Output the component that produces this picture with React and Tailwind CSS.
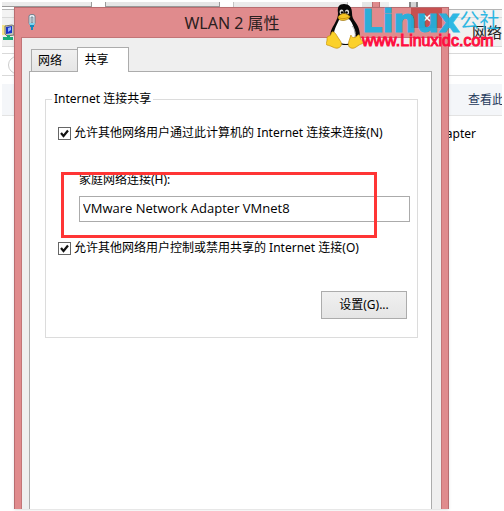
import React from 'react';

const NetworkIcon = () => (
    <svg className="h-[17px] w-3" viewBox="0 0 12 17" aria-hidden="true">
        <path d="M0 1h4v10H0z" fill="#f6e58a" />
        <path d="M3 2l7-1 2 1v9l-7 1-2-2z" fill="#c9c9bd" stroke="#77776c" strokeWidth="1" />
        <path d="M4 3l6-1v7l-6 1z" fill="#1a35c8" />
        <path d="M6 4l3-1v3l-3 2z" fill="#8eb4ff" />
        <path d="M5 11h3v2h3v3H1v-3h4z" fill="#1cae76" />
    </svg>
);

const AdapterIcon = () => (
    <svg className="h-4 w-2" viewBox="0 0 8 16" aria-hidden="true">
        <path d="M1 2q0-1.500 3-1.500T7 2v7l-1 2H2L1 9z" fill="#eef6fa" stroke="#6d7f8c" />
        <path d="M3 3h2v6H3z" fill="#c3cdd4" stroke="#5e7382" strokeWidth=".7" />
        <path d="M1 9h6l-1 2.500H2z" fill="#7ed3ee" />
        <path d="M2 11h4v2H5v3H3v-3H2z" fill="#1689bd" />
    </svg>
);

const Penguin = () => (
    <svg className="h-[46px] w-[38px] shrink-0" viewBox="0 0 38 46" aria-hidden="true">
        <path
            d="M12 10C11 4 13 1 18 1s8 3 8 9c0 4 1 6 4 10s5 11 3 16c-2 4-7 6-13 6S7 40 5 35s1-10 4-15c2-4 3-6 3-10z"
            fill="#080808"
        />
        <path d="M13 17c2-2 9-2 11 0 2 3 5 8 5 14 0 7-3 10-9 10-7 0-12-4-12-10 0-5 3-9 5-14z" fill="#fff" />
        <path d="M26 23c3 3 4 8 3 13" stroke="#aaa" fill="none" />
        <ellipse cx="15.500" cy="9" rx="2" ry="2.400" fill="#ddd" />
        <ellipse cx="21" cy="9" rx="2.200" ry="2.500" fill="#ddd" />
        <circle cx="16" cy="9.500" r="1.200" />
        <circle cx="20.500" cy="9.500" r="1.300" />
        <path d="M12 14c1-2 4-3.500 6-3.500s5 1.500 6 3c0 2-4 4-7 4s-5-1-5-3.500z" fill="#f5c524" stroke="#8e6505" strokeWidth=".6" />
        <path d="M13 14.500c3 2 7 1 10-.5" stroke="#a87206" strokeWidth=".6" fill="none" />
        <path
            d="M6 29c2-1 4 2 5 4l4 6c1 3 0 5-3 6s-6-2-11-3c-2-1 0-3 0-5s0-4 2-4 2-3 3-4z"
            fill="#fbd12b"
            stroke="#c28c0b"
            strokeWidth=".7"
        />
        <path
            d="M25 32c0 2 3 4 6 1 1-1 2-2 3 0 0 3 1 4 3 5 2 2-2 3-4 4-3 2-5 4-8 3s-3-4-2-7z"
            fill="#fbd12b"
            stroke="#c28c0b"
            strokeWidth=".7"
        />
    </svg>
);

// The network connections window that sits behind the dialog
const BackgroundWindow = () => (
    <div className="col-start-1 row-start-1 flex flex-col overflow-hidden">
        <div className="flex h-[7px]">
            <div className="h-[5px] w-[90px] border-r border-b border-[#9b9b9b] bg-[#ebebeb]" />
            <div className="ml-[13px] h-[5px] w-[115px] border-r border-b border-l border-[#9b9b9b] bg-[#e6e6e6]" />
            <div className="ml-[13px] h-[5px] w-[115px] border-r border-l border-[#c4c4c4] bg-[#ebebeb]" />
            <div className="ml-[14px] h-[5px] w-[10px] bg-[#e6e6e6]" />
            <div className="h-[5px] w-2 border-x border-[#b86d70] bg-[#e08b8d]" />
            <div className="h-[5px] w-[9px] bg-[#efefef]" />
            <div className="ml-[20px] h-[5px] w-[9px] border-x-2 border-[#888] bg-[#d5d5d5]" />
        </div>
        <div className="h-2 border-t border-[#b5b5b5] bg-[#f3f3f3]" />
        <div className="flex h-[30px] items-center justify-between border-y border-[#d9d9d9] bg-[#f0f0f0]">
            <NetworkIcon />
            <span className="text-[15px] leading-4 text-[#222]">网络</span>
        </div>
        <div className="h-[29px] bg-white">
            <div className="mt-[6px] flex h-[23px] items-center justify-between border-y border-[#d9d9d9]">
                <div className="ml-[6px] size-[18px] rounded-full border border-[#ccc]" />
            </div>
        </div>
        <div className="mt-2 flex h-8 items-center justify-end border-b border-[#e3e3e3] bg-[#f4f6f9]">
            <span className="w-[34px] overflow-hidden text-[12px] whitespace-nowrap text-[#1e395b]">查看此</span>
        </div>
        <div className="mt-[10px] flex justify-end pr-[26px] text-[12px] leading-4">apter</div>
    </div>
);

const CheckRow = ({ id, children }) => (
    <div className="flex items-center gap-[3px]">
        <span className="grid size-[13px] shrink-0">
            <input
                id={id}
                type="checkbox"
                defaultChecked
                className="peer col-start-1 row-start-1 size-[13px] appearance-none border border-[#666] bg-white"
            />
            <svg
                className="pointer-events-none invisible col-start-1 row-start-1 size-[13px] peer-checked:visible"
                viewBox="0 0 13 13"
                aria-hidden="true"
            >
                <path d="M3 6l2.500 3L10 3.500" fill="none" stroke="#111" strokeWidth="2.200" />
            </svg>
        </span>
        <label htmlFor={id} className="leading-4 whitespace-nowrap">
            {children}
        </label>
    </div>
);

const PropertiesDialog = () => (
    <div
        role="dialog"
        aria-labelledby="dialog-title"
        className="z-10 col-start-1 row-start-1 mt-[5px] mr-[53px] ml-3 flex flex-col border border-b-0 border-[#b86d70] bg-[#e08b8d] shadow-sm"
    >
        <div className="flex h-[29px]">
            <div className="flex w-[34px] justify-center pt-[6px]">
                <AdapterIcon />
            </div>
            <h1 id="dialog-title" className="flex-1 pt-[5px] pl-1 text-center text-[16px] leading-5 text-[#2b2020]">
                WLAN 2 属性
            </h1>
            <button
                type="button"
                aria-label="关闭"
                className="mr-[6px] flex h-5 w-[31px] items-center justify-center bg-[#c75050]"
            >
                <svg className="size-2" viewBox="0 0 8 8" aria-hidden="true">
                    <path d="M1 1l6 6M7 1L1 7" stroke="#fff" strokeWidth="1.600" />
                </svg>
            </button>
        </div>

        <div className="mx-[6px] flex flex-1 flex-col border border-b-0 border-[#c27577] bg-[#efefef] pt-[9px] pr-[9px] pl-[7px]">
            <div role="tablist" className="z-10 -mb-px flex items-end pl-[2px]">
                <button
                    type="button"
                    role="tab"
                    aria-selected="false"
                    className="-mr-px mb-px h-[22px] w-[47px] border border-b-0 border-[#acacac] bg-linear-to-b from-[#f0f0f0] to-[#e5e5e5] pr-[9px] leading-4"
                >
                    网络
                </button>
                <button
                    type="button"
                    role="tab"
                    aria-selected="true"
                    className="h-[25px] w-[52px] border border-b-0 border-[#acacac] bg-white pr-[13px] pb-px leading-4"
                >
                    共享
                </button>
            </div>

            <div role="tabpanel" className="flex-1 border border-b-0 border-[#acacac] bg-white pt-[19px] pr-[13px] pl-[15px]">
                <fieldset className="border border-[#dcdcdc] pr-[7px] pb-[18px] pl-3">
                    <legend className="-ml-[6px] px-[2px] leading-4">Internet 连接共享</legend>
                    <div className="pt-[18px]">
                        <CheckRow id="allow-connect">允许其他网络用户通过此计算机的 Internet 连接来连接(N)</CheckRow>
                    </div>
                    <div className="mt-[31px] ml-[21px] flex flex-col">
                        <label htmlFor="home-network" className="leading-4">
                            家庭网络连接(H):
                        </label>
                        <input
                            id="home-network"
                            type="text"
                            defaultValue="VMware Network Adapter VMnet8"
                            className="mt-2 h-[26px] w-full border border-[#ababab] bg-white px-[3px] pb-[3px] font-['Open_Sans',sans-serif] text-[13px]"
                        />
                    </div>
                    <div className="mt-[18px]">
                        <CheckRow id="allow-control">允许其他网络用户控制或禁用共享的 Internet 连接(O)</CheckRow>
                    </div>
                    <div className="mt-[35px] mr-[3px] flex justify-end">
                        <button
                            type="button"
                            className="h-7 w-[86px] border border-[#acacac] bg-linear-to-b from-[#f0f0f0] to-[#e5e5e5]"
                        >
                            设置(G)...
                        </button>
                    </div>
                </fieldset>
            </div>
        </div>
    </div>
);

const Watermark = () => (
    <div className="pointer-events-none absolute top-[3px] right-0 z-20 flex w-[178px]">
        <Penguin />
        <div className="-ml-[2px] flex flex-col whitespace-nowrap">
            <div className="flex h-8 items-center pt-1 text-[#18b2e2] opacity-90">
                <span className="font-[DejaVu_Sans,sans-serif] text-[32px] leading-8 font-bold [-webkit-text-stroke:1px_#18b2e2]">
                    Linux
                </span>
                <span className="text-[20px] leading-6">公社</span>
            </div>
            <span className="-mt-[2px] font-['Liberation_Sans',sans-serif] text-[16px] leading-4 text-[#ff1040] [-webkit-text-stroke:1px_#ff1040]">
                www.Linuxidc.com
            </span>
        </div>
    </div>
);

const App = () => (
    <div className="relative grid min-h-screen overflow-hidden bg-white p-[2px] font-['Noto_Sans','Noto_Sans_CJK_SC',sans-serif] text-[12px] text-black">
        <BackgroundWindow />
        <PropertiesDialog />
        {/* highlight around the connection field */}
        <div className="pointer-events-none absolute top-[172px] right-[127px] left-[61px] z-20 h-[66px] border-3 border-[#ff3535]" />
        <Watermark />
    </div>
);

export default App;
